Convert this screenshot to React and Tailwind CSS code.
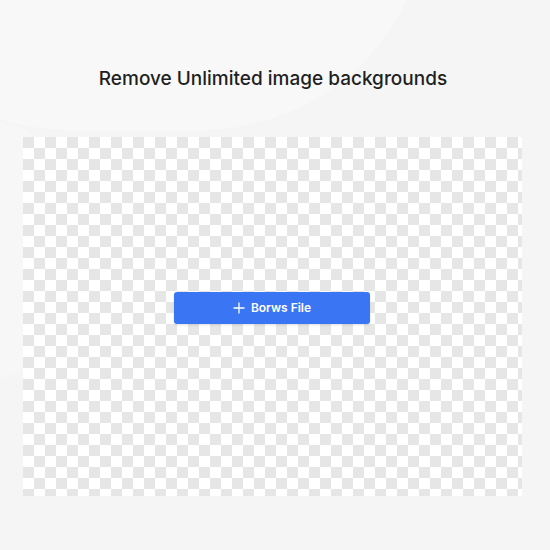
import React from "react";

const App = () => {
  return (
    <div className="relative w-[550px] h-[550px] overflow-hidden bg-[#f5f5f6] font-['Inter',sans-serif]">
      {/* soft background shapes */}
      <div className="absolute -left-[160px] -top-[330px] w-[590px] h-[460px] rounded-full bg-[#f8f8f9]" />
      <div className="absolute -left-[120px] top-[120px] w-[200px] h-[260px] rounded-full bg-[#f7f7f8]" />

      <div className="relative flex flex-col items-center">
        <h1 className="mt-[67px] ml-[-4px] h-[24px] text-[19px] leading-[24px] font-medium text-[#1f1f1f]">
          Remove Unlimited image backgrounds
        </h1>

        {/* Checkerboard area */}
        <div className="mt-[46px] ml-[-6px] w-[499px] h-[359px] flex items-center justify-center bg-[conic-gradient(#ffffff_25%,#e6e6e6_0_50%,#ffffff_0_75%,#e6e6e6_0)] bg-[length:22px_22px]">
          <button className="mt-[-18px] w-[196px] h-[32px] rounded-[3px] bg-[#3a76f3] flex items-center justify-center gap-[6px] text-white text-[12px] font-semibold shadow-sm">
            <svg width="12" height="12" viewBox="0 0 12 12" fill="none" stroke="currentColor" strokeWidth="1.3">
              <path d="M6 0.5v11M0.5 6h11" />
            </svg>
            Borws File
          </button>
        </div>
      </div>
    </div>
  );
};

export default App;
